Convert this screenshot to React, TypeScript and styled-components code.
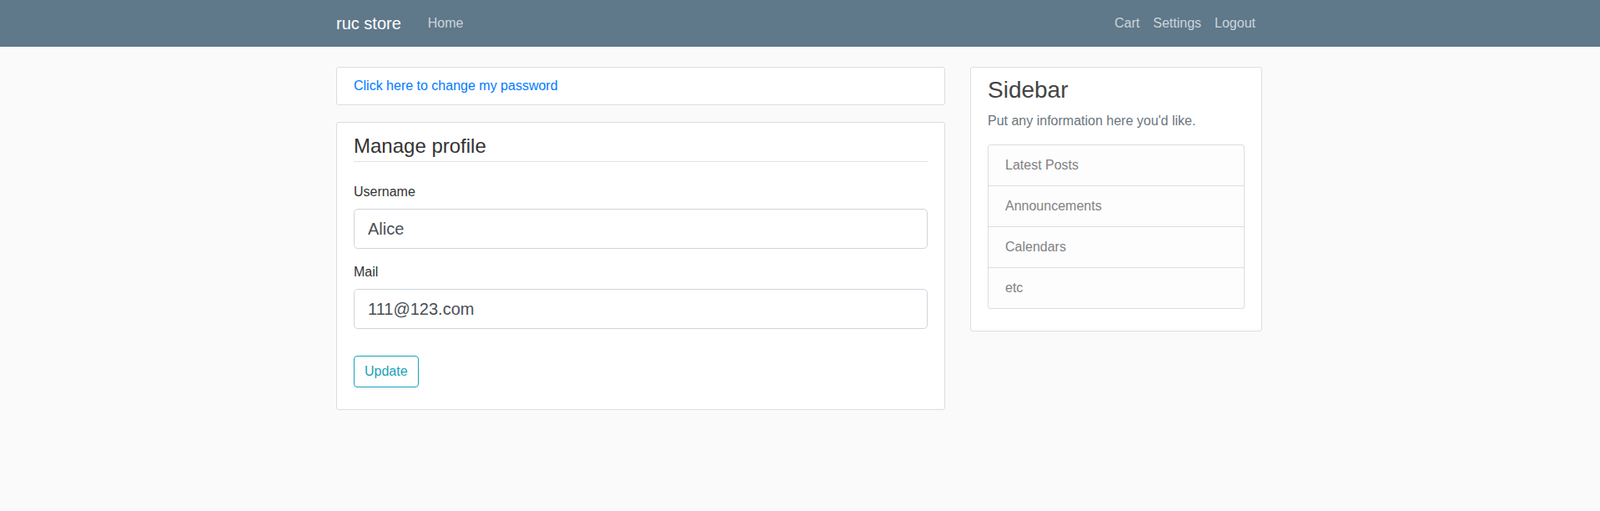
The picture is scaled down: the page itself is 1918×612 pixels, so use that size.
import React from "react";
import styled, { createGlobalStyle } from "styled-components";

const GlobalStyle = createGlobalStyle`
  *, *::before, *::after { box-sizing: border-box; }
  html, body { margin: 0; padding: 0; }
  body {
    background: #fafafa;
    color: #333333;
    font-family: "Liberation Sans", Arial, sans-serif;
    font-size: 16px;
    line-height: 1.5;
  }
`;

const Header = styled.header`
  background-color: #5f788a;
  height: 56px;
  padding: 8px 0;
`;

const Container = styled.div`
  width: 1140px;
  margin: 0 0 0 calc(50% - 571px);
  padding: 0 15px;
`;

const NavBar = styled(Container)`
  display: flex;
  align-items: center;
  height: 40px;
`;

const Brand = styled.a`
  color: #ffffff;
  font-size: 20px;
  line-height: 30px;
  padding: 5px 0;
  margin-right: 24px;
  text-decoration: none;
  white-space: nowrap;
`;

const NavGroup = styled.nav<{ $right?: boolean }>`
  display: flex;
  margin-left: ${(p) => (p.$right ? "auto" : "0")};
`;

const NavLink = styled.a`
  color: #cbd5db;
  text-decoration: none;
  padding: 8px;
  line-height: 24px;
`;

const Main = styled(Container)`
  display: flex;
  padding-top: 24px;
`;

const Col = styled.div<{ $w: number }>`
  width: ${(p) => p.$w}px;
  padding: 0 15px;
  &:first-child { margin-left: -15px; }
  &:last-child { margin-right: -15px; }
`;

const Section = styled.div`
  background: #ffffff;
  padding: 10px 20px;
  border: 1px solid #dddddd;
  border-radius: 3px;
  margin-bottom: 20px;
`;

const BlueLink = styled.a`
  color: #007bff;
  text-decoration: none;
`;

const Fieldset = styled.fieldset`
  border: 0;
  margin: 0 0 16px;
  padding: 0;
  min-width: 0;
`;

const Legend = styled.legend`
  display: block;
  width: 100%;
  padding: 0;
  font-size: 24px;
  line-height: 36px;
  margin-bottom: 24px;
  border-bottom: 1px solid #dee2e6;
  color: #333333;
`;

const Group = styled.div`
  margin-bottom: 16px;
`;

const Label = styled.label`
  display: block;
  margin-bottom: 8px;
  color: #333333;
`;

const Input = styled.input`
  display: block;
  width: 100%;
  height: 48px;
  padding: 8px 16px;
  font-family: inherit;
  font-size: 20px;
  line-height: 1.5;
  color: #495057;
  background: #ffffff;
  border: 1px solid #ced4da;
  border-radius: 4.8px;
  outline: none;
`;

const OutlineButton = styled.button`
  font-family: inherit;
  font-size: 16px;
  line-height: 24px;
  padding: 6px 12px;
  color: #17a2b8;
  background: transparent;
  border: 1px solid #17a2b8;
  border-radius: 4px;
  cursor: pointer;
`;

const SideTitle = styled.h3`
  margin: 0 0 8px;
  font-size: 28px;
  font-weight: 500;
  line-height: 1.2;
  color: #444444;
`;

const Muted = styled.p`
  margin: 0 0 16px;
  color: #6c757d;
`;

const List = styled.ul`
  list-style: none;
  margin: 0 0 16px;
  padding: 0;
  display: flex;
  flex-direction: column;
`;

const ListItem = styled.li`
  padding: 12px 20px;
  background: #fdfdfe;
  color: #818182;
  border: 1px solid rgba(0, 0, 0, 0.125);
  margin-bottom: -1px;
  &:first-child { border-radius: 4px 4px 0 0; }
  &:last-child { border-radius: 0 0 4px 4px; margin-bottom: 0; }
`;

export default function App() {
  return (
    <>
      <GlobalStyle />
      <Header>
        <NavBar>
          <Brand href="#">ruc store</Brand>
          <NavGroup>
            <NavLink href="#">Home</NavLink>
          </NavGroup>
          <NavGroup $right>
            <NavLink href="#">Cart</NavLink>
            <NavLink href="#">Settings</NavLink>
            <NavLink href="#">Logout</NavLink>
          </NavGroup>
        </NavBar>
      </Header>
      <Main>
        <Col $w={760}>
          <Section>
            <BlueLink href="#">Click here to change my password</BlueLink>
          </Section>
          <Section>
            <form onSubmit={(e) => e.preventDefault()}>
              <Fieldset>
                <Legend>Manage profile</Legend>
                <Group>
                  <Label>Username</Label>
                  <Input defaultValue="Alice" />
                </Group>
                <Group>
                  <Label>Mail</Label>
                  <Input defaultValue="111@123.com" />
                </Group>
              </Fieldset>
              <Group>
                <OutlineButton type="submit">Update</OutlineButton>
              </Group>
            </form>
          </Section>
        </Col>
        <Col $w={380}>
          <Section>
            <SideTitle>Sidebar</SideTitle>
            <Muted>Put any information here you'd like.</Muted>
            <List>
              <ListItem>Latest Posts</ListItem>
              <ListItem>Announcements</ListItem>
              <ListItem>Calendars</ListItem>
              <ListItem>etc</ListItem>
            </List>
          </Section>
        </Col>
      </Main>
    </>
  );
}
